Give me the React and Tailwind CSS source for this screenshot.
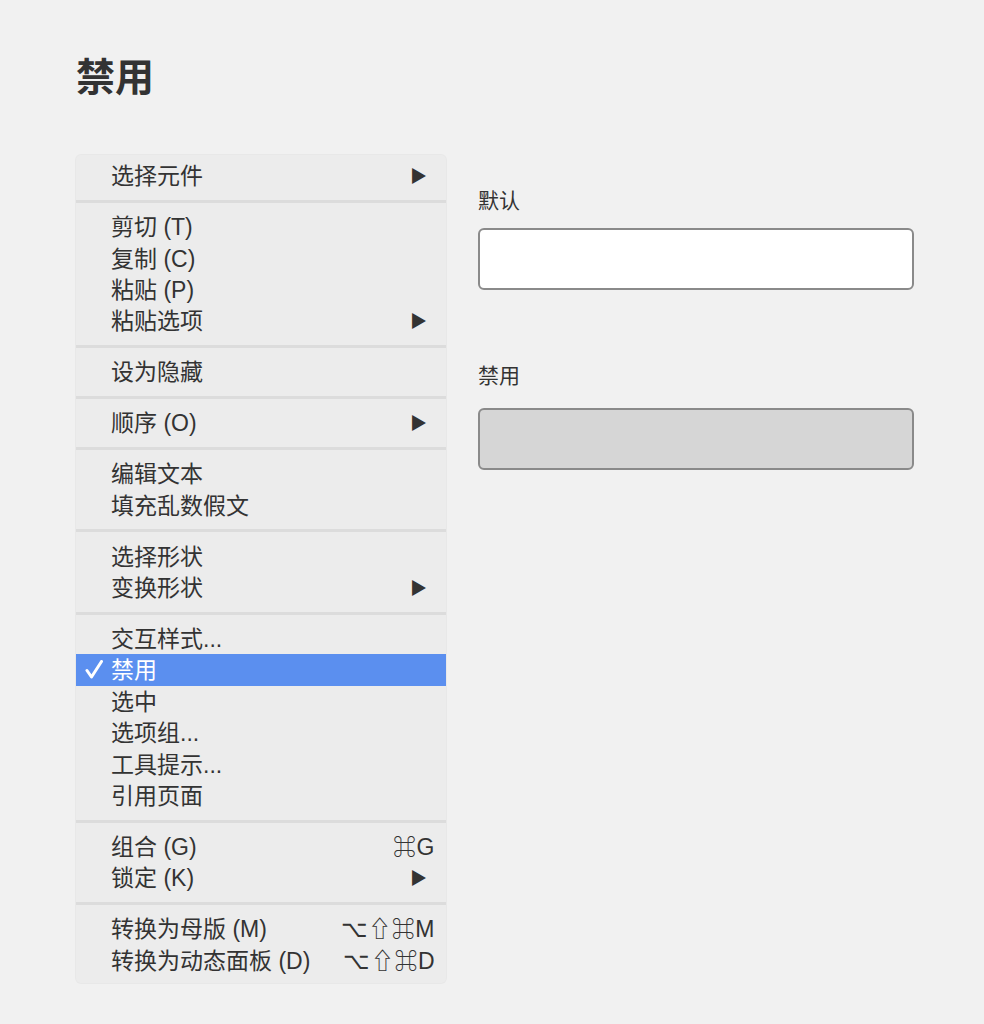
import React from "react";

const FONT = { fontFamily: '"Liberation Sans", "Noto Sans CJK SC", sans-serif' };

const sections = [
  [{ label: "选择元件", sub: true }],
  [
    { label: "剪切 (T)" },
    { label: "复制 (C)" },
    { label: "粘贴 (P)" },
    { label: "粘贴选项", sub: true },
  ],
  [{ label: "设为隐藏" }],
  [{ label: "顺序 (O)", sub: true }],
  [{ label: "编辑文本" }, { label: "填充乱数假文" }],
  [{ label: "选择形状" }, { label: "变换形状", sub: true }],
  [
    { label: "交互样式..." },
    { label: "禁用", checked: true },
    { label: "选中" },
    { label: "选项组..." },
    { label: "工具提示..." },
    { label: "引用页面" },
  ],
  [
    { label: "组合 (G)", keys: "⌘G" },
    { label: "锁定 (K)", sub: true },
  ],
  [
    { label: "转换为母版 (M)", keys: "⌥⇧⌘M" },
    { label: "转换为动态面板 (D)", keys: "⌥⇧⌘D" },
  ],
];

function Check() {
  return (
    <svg width="18" height="19" viewBox="0 0 18 19" className="absolute left-[9px] top-[6px]">
      <path d="M2 10.5 L6.5 17 L16.5 1.5" fill="none" stroke="white" strokeWidth="3" strokeLinecap="round" strokeLinejoin="round" />
    </svg>
  );
}

function Item({ item }) {
  const active = item.checked;
  return (
    <div
      className={`relative flex h-[31.4px] items-center pl-[35px] pt-[2px] text-[23px] leading-none ${
        active ? "bg-[#5b8fef] text-white" : "text-[#333333]"
      }`}
    >
      {active && <Check />}
      <span className="flex-1">{item.label}</span>
      {item.sub && <span className="pr-[19px] text-[17px] text-[#333333]">▶</span>}
      {item.keys && <span className="pr-[11px] text-[23px] tracking-[0.5px]">{item.keys}</span>}
    </div>
  );
}

export default function App() {
  return (
    <div className="min-h-[1024px] w-full bg-[#f1f1f1] pl-[76px] pt-[58px]" style={FONT}>
      <h1 className="text-[39px] font-bold leading-[40px] text-[#333333]">禁用</h1>

      <div className="mt-[57px] flex gap-[32px]">
        <div className="w-[370px] rounded-[5px] bg-[#ececec] pb-[7px] pt-[5px] shadow-[0_0_0_1px_rgba(0,0,0,0.035)]">
          {sections.map((sec, i) => (
            <div key={i}>
              {i > 0 && (
                <div className="flex h-[19.6px] items-center">
                  <div className="h-[3px] w-full bg-[#dcdcdc]" />
                </div>
              )}
              {sec.map((item) => (
                <Item key={item.label} item={item} />
              ))}
            </div>
          ))}
        </div>

        <div className="flex w-[436px] flex-col pt-[32px]">
          <label className="text-[21px] leading-[28px] text-[#333333]">默认</label>
          <div className="mt-[13px] h-[62px] rounded-[6px] border-2 border-[#8a8a8a] bg-white" />
          <label className="mt-[72px] text-[21px] leading-[28px] text-[#333333]">禁用</label>
          <div className="mt-[18px] h-[62px] rounded-[6px] border-2 border-[#8a8a8a] bg-[#d6d6d6]" />
        </div>
      </div>
    </div>
  );
}
